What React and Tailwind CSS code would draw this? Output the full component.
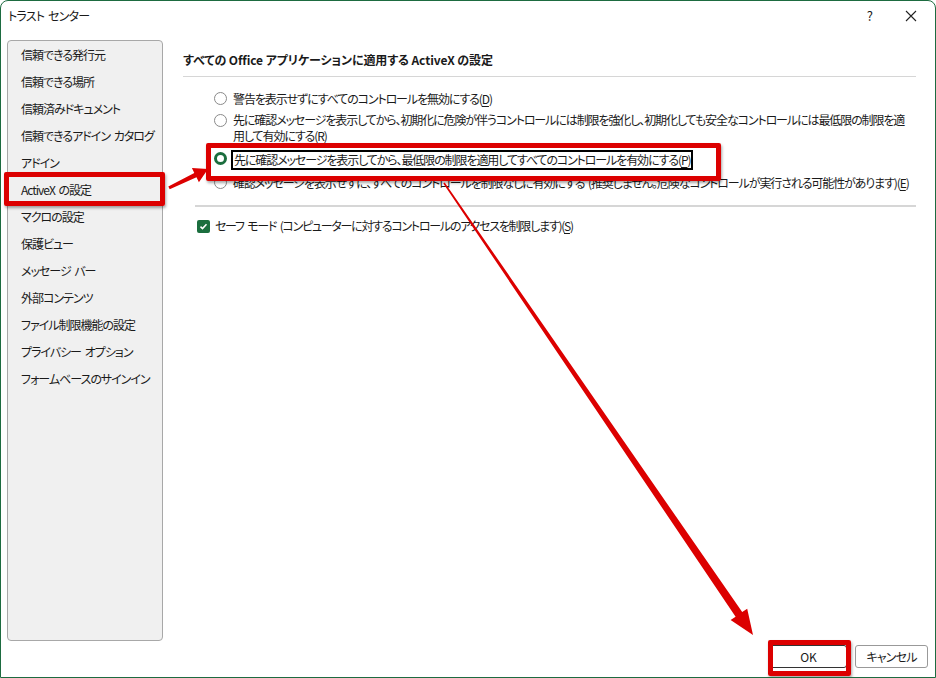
import * as React from "react";

const menuItems = [
  "信頼できる発行元",
  "信頼できる場所",
  "信頼済みドキュメント",
  "信頼できるアドイン カタログ",
  "アドイン",
  "ActiveX の設定",
  "マクロの設定",
  "保護ビュー",
  "メッセージ バー",
  "外部コンテンツ",
  "ファイル制限機能の設定",
  "プライバシー オプション",
  "フォームベースのサインイン",
];

function Radio({ checked }) {
  if (checked) {
    return (
      <span className="mt-[2px] flex h-[13px] w-[13px] shrink-0 items-center justify-center rounded-full border-[3.5px] border-[#1b6e3e] bg-white" />
    );
  }
  return (
    <span className="mt-[2px] h-[13px] w-[13px] shrink-0 rounded-full border border-[#8a8a8a] bg-white" />
  );
}

function Key({ k }) {
  return (
    <>
      (<span className="underline underline-offset-2">{k}</span>)
    </>
  );
}

export default function App() {
  return (
    <div className="relative h-[678px] w-[936px] overflow-hidden rounded-t-[8px] border border-[#1d6b40] bg-white text-[12px] text-[#1a1a1a] [font-family:'Noto_Sans_CJK_JP','Noto_Sans',sans-serif] [font-feature-settings:'palt'] [word-spacing:2px]">
      {/* title bar */}
      <div className="flex h-[30px] items-center justify-between pl-[7px] pr-[18px]">
        <div className="text-[12px] tracking-[-0.8px]">トラスト センター</div>
        <div className="flex items-center gap-[32px] text-[13px]">
          <span>?</span>
          <svg width="12" height="12" viewBox="0 0 12 12">
            <path d="M1 1l10 10M11 1L1 11" stroke="#222" strokeWidth="1.1" />
          </svg>
        </div>
      </div>

      <div className="flex pt-[9px]">
        {/* sidebar */}
        <div className="ml-[6px] h-[601px] w-[156px] shrink-0 rounded-[4px] border border-[#a8a8a8] bg-[#f0f0f0]">
          {menuItems.map((item) => (
            <div
              key={item}
              className="flex h-[27px] items-center whitespace-nowrap pl-[13px] tracking-[-1px]"
            >
              {item}
            </div>
          ))}
        </div>

        {/* content */}
        <div className="ml-[20px] flex-1 whitespace-nowrap pr-[19px]">
          <div className="pt-[11px] font-bold tracking-[-0.1px] [word-spacing:0px]">
            すべての Office アプリケーションに適用する ActiveX の設定
          </div>
          <div className="mt-[7px] h-px bg-[#d6d6d6]" />

          <div className="ml-[31px] mt-[13px] flex flex-col tracking-[-1.1px]">
            <div className="flex h-[20px] items-start gap-[6px]">
              <Radio />
              <span className="leading-[18px]">
                警告を表示せずにすべてのコントロールを無効にする<Key k="D" />
              </span>
            </div>
            <div className="mt-[2px] flex items-start gap-[6px]">
              <Radio />
              <span className="leading-[16px]">
                先に確認メッセージを表示してから、初期化に危険が伴うコントロールには制限を強化し、初期化しても安全なコントロールには最低限の制限を適
                <br />
                用して有効にする<Key k="R" />
              </span>
            </div>
            <div className="mt-[6px] flex h-[22px] items-start gap-[4px]">
              <Radio checked />
              <span className="h-[20px] border-2 border-black px-[1px] leading-[16px]">
                先に確認メッセージを表示してから、最低限の制限を適用してすべてのコントロールを有効にする<Key k="P" />
              </span>
            </div>
            <div className="mt-[2px] flex items-start gap-[6px]">
              <Radio />
              <span className="leading-[18px]">
                確認メッセージを表示せずに、すべてのコントロールを制限なしに有効にする (推奨しません。危険なコントロールが実行される可能性があります)<Key k="E" />
              </span>
            </div>
          </div>

          <div className="ml-[12px] mt-[13px] h-[2px] bg-[#d6d6d6]" />

          <div className="ml-[14px] mt-[10px] flex items-center gap-[5px] tracking-[-1.25px]">
            <span className="flex h-[13px] w-[13px] items-center justify-center rounded-[2px] bg-[#1b6e3e]">
              <svg width="9" height="9" viewBox="0 0 9 9">
                <path d="M1.5 4.6l2 2 4-4.4" fill="none" stroke="white" strokeWidth="1.5" />
              </svg>
            </span>
            <span>
              セーフ モード (コンピューターに対するコントロールのアクセスを制限します)<Key k="S" />
            </span>
          </div>
        </div>
      </div>

      {/* buttons */}
      <div className="absolute bottom-[9px] right-[7px] flex items-center gap-[8px]">
        <button className="h-[23px] w-[77px] rounded-[3px] border border-[#333] bg-white text-[12px]">
          OK
        </button>
        <button className="h-[23px] w-[73px] rounded-[3px] border border-[#999] bg-white text-[12px] tracking-[-0.8px]">
          キャンセル
        </button>
      </div>

      {/* annotations */}
      <div className="pointer-events-none absolute left-[3px] top-[171px] h-[34px] w-[161px] rounded-[2px] border-[5px] border-[#dc0000] shadow-[1px_2px_3px_rgba(0,0,0,0.35)]" />
      <div className="pointer-events-none absolute left-[205px] top-[142px] h-[38px] w-[515px] rounded-[2px] border-[5px] border-[#dc0000] shadow-[1px_2px_3px_rgba(0,0,0,0.35)]" />
      <div className="pointer-events-none absolute left-[767px] top-[639px] h-[36px] w-[83px] rounded-[2px] border-[5px] border-[#dc0000] shadow-[1px_2px_3px_rgba(0,0,0,0.35)]" />

      <svg
        className="pointer-events-none absolute left-0 top-0"
        width="936"
        height="678"
        viewBox="0 0 936 678"
      >
        <polygon
          points="168.7,188.3 195.5,176.3 197.9,181.3 207,168 190.9,166.9 193.3,171.9 167.3,185.6"
          fill="#dc0000"
        />
        <polygon
          points="442.3,182.5 734.6,615.7 729.6,619.1 752,634 746.2,607.8 741.2,611.1 443.7,181.5"
          fill="#dc0000"
        />
      </svg>
    </div>
  );
}
